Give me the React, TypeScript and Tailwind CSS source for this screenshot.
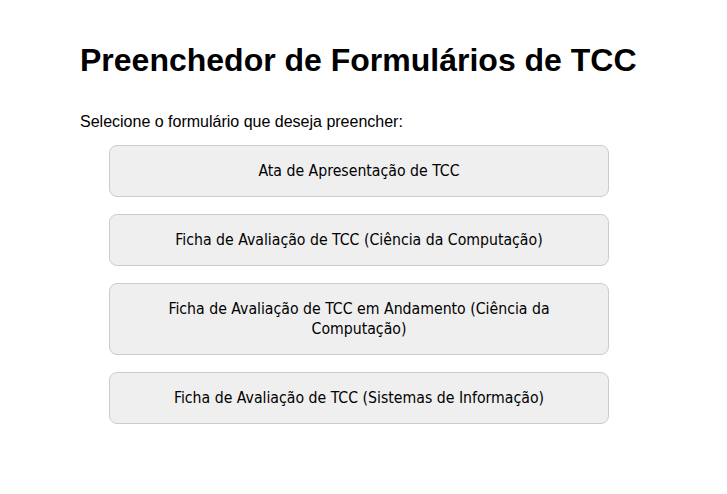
const forms = [
  "Ata de Apresentação de TCC",
  "Ficha de Avaliação de TCC (Ciência da Computação)",
  "Ficha de Avaliação de TCC em Andamento (Ciência da Computação)",
  "Ficha de Avaliação de TCC (Sistemas de Informação)",
];

export default function App() {
  return (
    <div className="min-h-[494px] bg-white text-black">
      <div className="ml-[80px] w-[558px] pt-[21px] font-['Liberation_Sans',Arial,sans-serif]">
        <h1 className="my-[21px] whitespace-nowrap text-[32px] font-bold leading-[37px]">
          Preenchedor de Formulários de TCC
        </h1>
        <p className="mt-[34px] text-[16px] leading-[18px]">Selecione o formulário que deseja preencher:</p>
        <div className="mx-[29px] mt-[14px] flex flex-col gap-[17px]">
          {forms.map((f) => (
            <button
              key={f}
              className="w-[500px] rounded-lg border border-[#cccccc] bg-[#efefef] px-[40px] py-[15px] text-center font-['DejaVu_Sans_Condensed','DejaVu_Sans',Tahoma,sans-serif] text-[15.7px] leading-[20px] text-black"
            >
              {f}
            </button>
          ))}
        </div>
      </div>
    </div>
  );
}
